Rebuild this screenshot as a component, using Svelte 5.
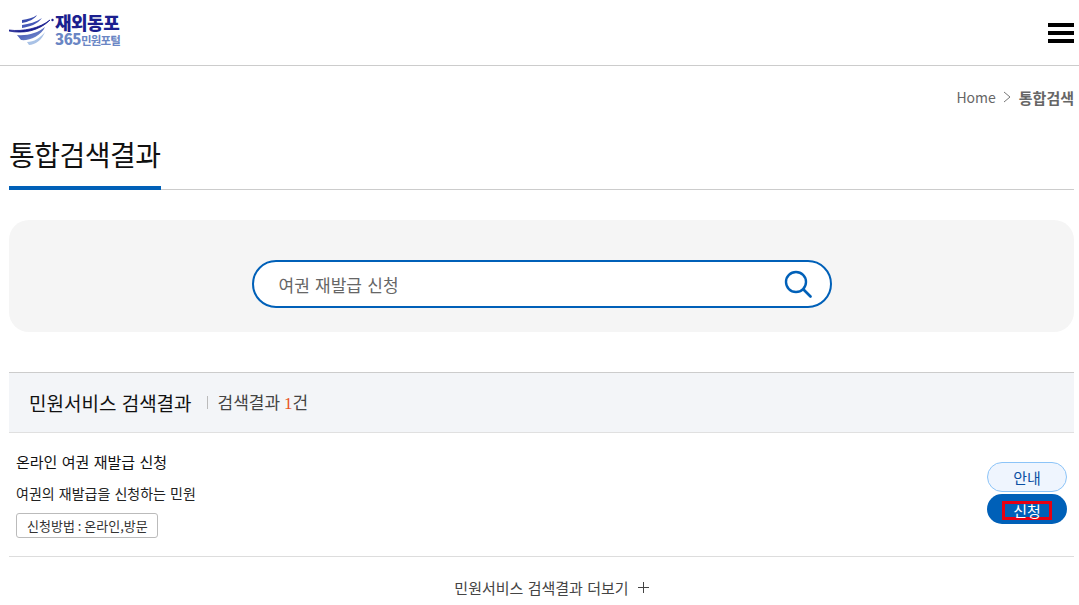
<script lang="ts">
  let query = $state('여권 재발급 신청');
</script>

<header class="topbar">
  <a class="logo" href="#top">
    <svg class="logo-mark" viewBox="0 0 46 34" width="46" height="34" aria-hidden="true">
      <defs>
        <linearGradient id="band" x1="0" y1="0" x2="1" y2="1">
          <stop offset="0" stop-color="#2f3ea6" />
          <stop offset="1" stop-color="#7f9ad6" />
        </linearGradient>
      </defs>
      <path d="M0 17 C14 20 30 17 41 6 C31 14 14 18 0 16Z" fill="#1b1f8f" stroke="#1b1f8f" stroke-width="0.800" />
      <path d="M13 6 C19 5 24 4 28 1 C26 5 19 8 13 9Z" fill="#3a4cae" />
      <path d="M13 11 C20 10 27 8 33 4 C29 10 20 13 13 14Z" fill="#4659b8" />
      <path d="M8 21 C18 22 29 19 36 13 C32 22 20 27 12 26Z" fill="url(#band)" />
      <path d="M18 28 C25 28 31 24 36 18 C33 26 26 31 20 31Z" fill="#a9c2e6" />
      <circle cx="43.500" cy="6" r="1.200" fill="#1b1f8f" />
    </svg>
    <span class="logo-text">
      <strong>재외동포</strong>
      <small><b>365</b>민원포털</small>
    </span>
  </a>
  <button class="menu" type="button" aria-label="메뉴">
    <span></span><span></span><span></span>
  </button>
</header>

<main class="page">
  <nav class="crumbs">
    <span class="home">Home</span>
    <svg viewBox="0 0 8 12" width="8" height="12" aria-hidden="true">
      <path d="M1 1l6 5-6 5" fill="none" stroke="#777" stroke-width="1" />
    </svg>
    <strong>통합검색</strong>
  </nav>

  <h1 class="title"><span>통합검색결과</span></h1>

  <section class="search-panel">
    <form class="search-box">
      <input type="text" bind:value={query} />
      <button type="button" aria-label="검색">
        <svg viewBox="0 0 28 28" width="28" height="28" aria-hidden="true">
          <circle cx="12" cy="12" r="10" fill="none" stroke="#0060b8" stroke-width="2.400" />
          <path d="M19.500 19.500l7 7" fill="none" stroke="#0060b8" stroke-width="2.600" stroke-linecap="round" />
        </svg>
      </button>
    </form>
  </section>

  <section class="results">
    <div class="results-head">
      <h2>민원서비스 검색결과</h2>
      <p>검색결과 <em>1</em>건</p>
    </div>
    <article class="result">
      <div class="result-body">
        <h3>온라인 여권 재발급 신청</h3>
        <p>여권의 재발급을 신청하는 민원</p>
        <span class="method">신청방법 : 온라인,방문</span>
      </div>
      <div class="result-actions">
        <button class="btn-info" type="button">안내</button>
        <button class="btn-apply" type="button"><span>신청</span></button>
      </div>
    </article>
    <a class="more" href="#more">민원서비스 검색결과 더보기
      <svg viewBox="0 0 11 11" width="11" height="11" aria-hidden="true">
        <path d="M5.500 0v11M0 5.500h11" stroke="#444" stroke-width="1" />
      </svg>
    </a>
  </section>
</main>

<style>
  :global(body) {
    background: #fff;
    font-family: "Noto Sans CJK KR", "Noto Sans", sans-serif;
    color: #222;
    overflow: hidden;
  }
  .topbar {
    height: 65px;
    display: flex;
    align-items: center;
    justify-content: space-between;
    padding: 0 5px 0 9px;
    border-bottom: 1px solid #ccc;
  }
  .logo {
    display: flex;
    align-items: flex-start;
    text-decoration: none;
    height: 34px;
    margin-top: -5px;
  }
  .logo-mark {
    margin-top: 1px;
  }
  .logo-text {
    display: flex;
    flex-direction: column;
    margin-top: -1px;
  }
  .logo-text strong {
    font-size: 18px;
    line-height: 20px;
    font-weight: 900;
    letter-spacing: -0.5px;
    color: #1b1f8f;
  }
  .logo-text small {
    font-size: 11.500px;
    line-height: 14px;
    font-weight: 700;
    letter-spacing: -0.8px;
    color: #6a86c4;
  }
  .logo-text b {
    font-size: 15px;
    letter-spacing: -0.5px;
  }
  .menu {
    width: 26px;
    height: 20px;
    padding: 0;
    border: none;
    background: none;
    display: flex;
    flex-direction: column;
    justify-content: space-between;
  }
  .menu span {
    display: block;
    height: 4px;
    background: #000;
  }
  .page {
    padding: 0 5px 0 9px;
  }
  .crumbs {
    display: flex;
    align-items: center;
    justify-content: flex-end;
    gap: 7px;
    height: 24px;
    margin-top: 19px;
    font-size: 15px;
    color: #666;
  }
  .crumbs .home {
    font-size: 14px;
  }
  .crumbs strong {
    margin-left: 1px;
    font-weight: 700;
    color: #666;
  }
  .title {
    margin: 25px 0 0;
    border-bottom: 1px solid #ccc;
    font-size: 28px;
    font-weight: 400;
    line-height: 40px;
    letter-spacing: -0.5px;
    color: #111;
  }
  .title span {
    display: inline-block;
    min-width: 152px;
    margin-bottom: -1px;
    border-bottom: 4px solid #0060b8;
    box-sizing: border-box;
    height: 56px;
    vertical-align: top;
  }
  .search-panel {
    margin-top: 30px;
    height: 112px;
    box-sizing: border-box;
    padding-top: 16px;
    display: flex;
    align-items: center;
    justify-content: center;
    background: #f5f5f5;
    border-radius: 20px;
  }
  .search-box {
    width: 580px;
    height: 48px;
    box-sizing: border-box;
    display: flex;
    align-items: center;
    padding: 0 18px 0 25px;
    background: #fff;
    border: 2px solid #0060b8;
    border-radius: 24px;
  }
  .search-box input {
    flex: 1;
    border: none;
    outline: none;
    background: none;
    font: inherit;
    font-size: 17px;
    word-spacing: 1.500px;
    color: #666;
    padding: 0;
  }
  .search-box button {
    border: none;
    background: none;
    padding: 0;
    display: flex;
  }
  .results {
    margin-top: 40px;
  }
  .results-head {
    height: 59px;
    display: flex;
    align-items: center;
    padding-left: 20px;
    background: #f3f5f8;
    border-top: 1px solid #ccc;
    border-bottom: 1px solid #e0e0e0;
  }
  .results-head h2 {
    margin: 0;
    font-size: 19px;
    line-height: 28px;
    font-weight: 400;
    word-spacing: 1px;
    color: #111;
  }
  .results-head p {
    margin: 0 0 0 15px;
    padding-left: 11px;
    position: relative;
    font-size: 17px;
    line-height: 28px;
    color: #444;
  }
  .results-head p::before {
    content: "";
    position: absolute;
    left: 0;
    top: 8px;
    width: 1px;
    height: 13px;
    background: #bbb;
  }
  .results-head em {
    font-style: normal;
    font-family: "Liberation Serif", serif;
    color: #e8541e;
  }
  .result {
    height: 124px;
    box-sizing: border-box;
    display: flex;
    align-items: center;
    justify-content: space-between;
    padding: 0 7px;
    border-bottom: 1px solid #ddd;
  }
  .result-body h3 {
    margin: 0;
    font-size: 15px;
    line-height: 20px;
    font-weight: 400;
    word-spacing: 1px;
    color: #111;
  }
  .result-body p {
    margin: 11px 0 0;
    font-size: 14px;
    line-height: 20px;
    word-spacing: 1px;
    color: #222;
  }
  .method {
    display: inline-block;
    margin-top: 10px;
    padding: 0 9px 0 10px;
    height: 25px;
    line-height: 23px;
    box-sizing: border-box;
    border: 1px solid #bbb;
    border-radius: 3px;
    font-size: 13px;
    color: #333;
  }
  .result-actions {
    display: flex;
    flex-direction: column;
    gap: 2px;
    margin-bottom: 3px;
  }
  .result-actions button {
    width: 80px;
    height: 30px;
    padding: 0;
    border-radius: 15px;
    font: inherit;
    font-size: 15px;
  }
  .btn-info {
    background: #eff5fe;
    border: 1px solid #8cc4f8;
    color: #0a4fa3;
  }
  .btn-apply {
    background: #0060b8;
    border: none;
    color: #fff;
  }
  .btn-apply span {
    display: inline-block;
    width: 50px;
    height: 19px;
    line-height: 13px;
    box-sizing: border-box;
    border: 3px solid #e60012;
    vertical-align: middle;
  }
  .more {
    display: flex;
    align-items: center;
    justify-content: center;
    gap: 9px;
    height: 60px;
    padding-left: 20px;
    font-size: 15px;
    word-spacing: 1px;
    color: #444;
    text-decoration: none;
  }
</style>
